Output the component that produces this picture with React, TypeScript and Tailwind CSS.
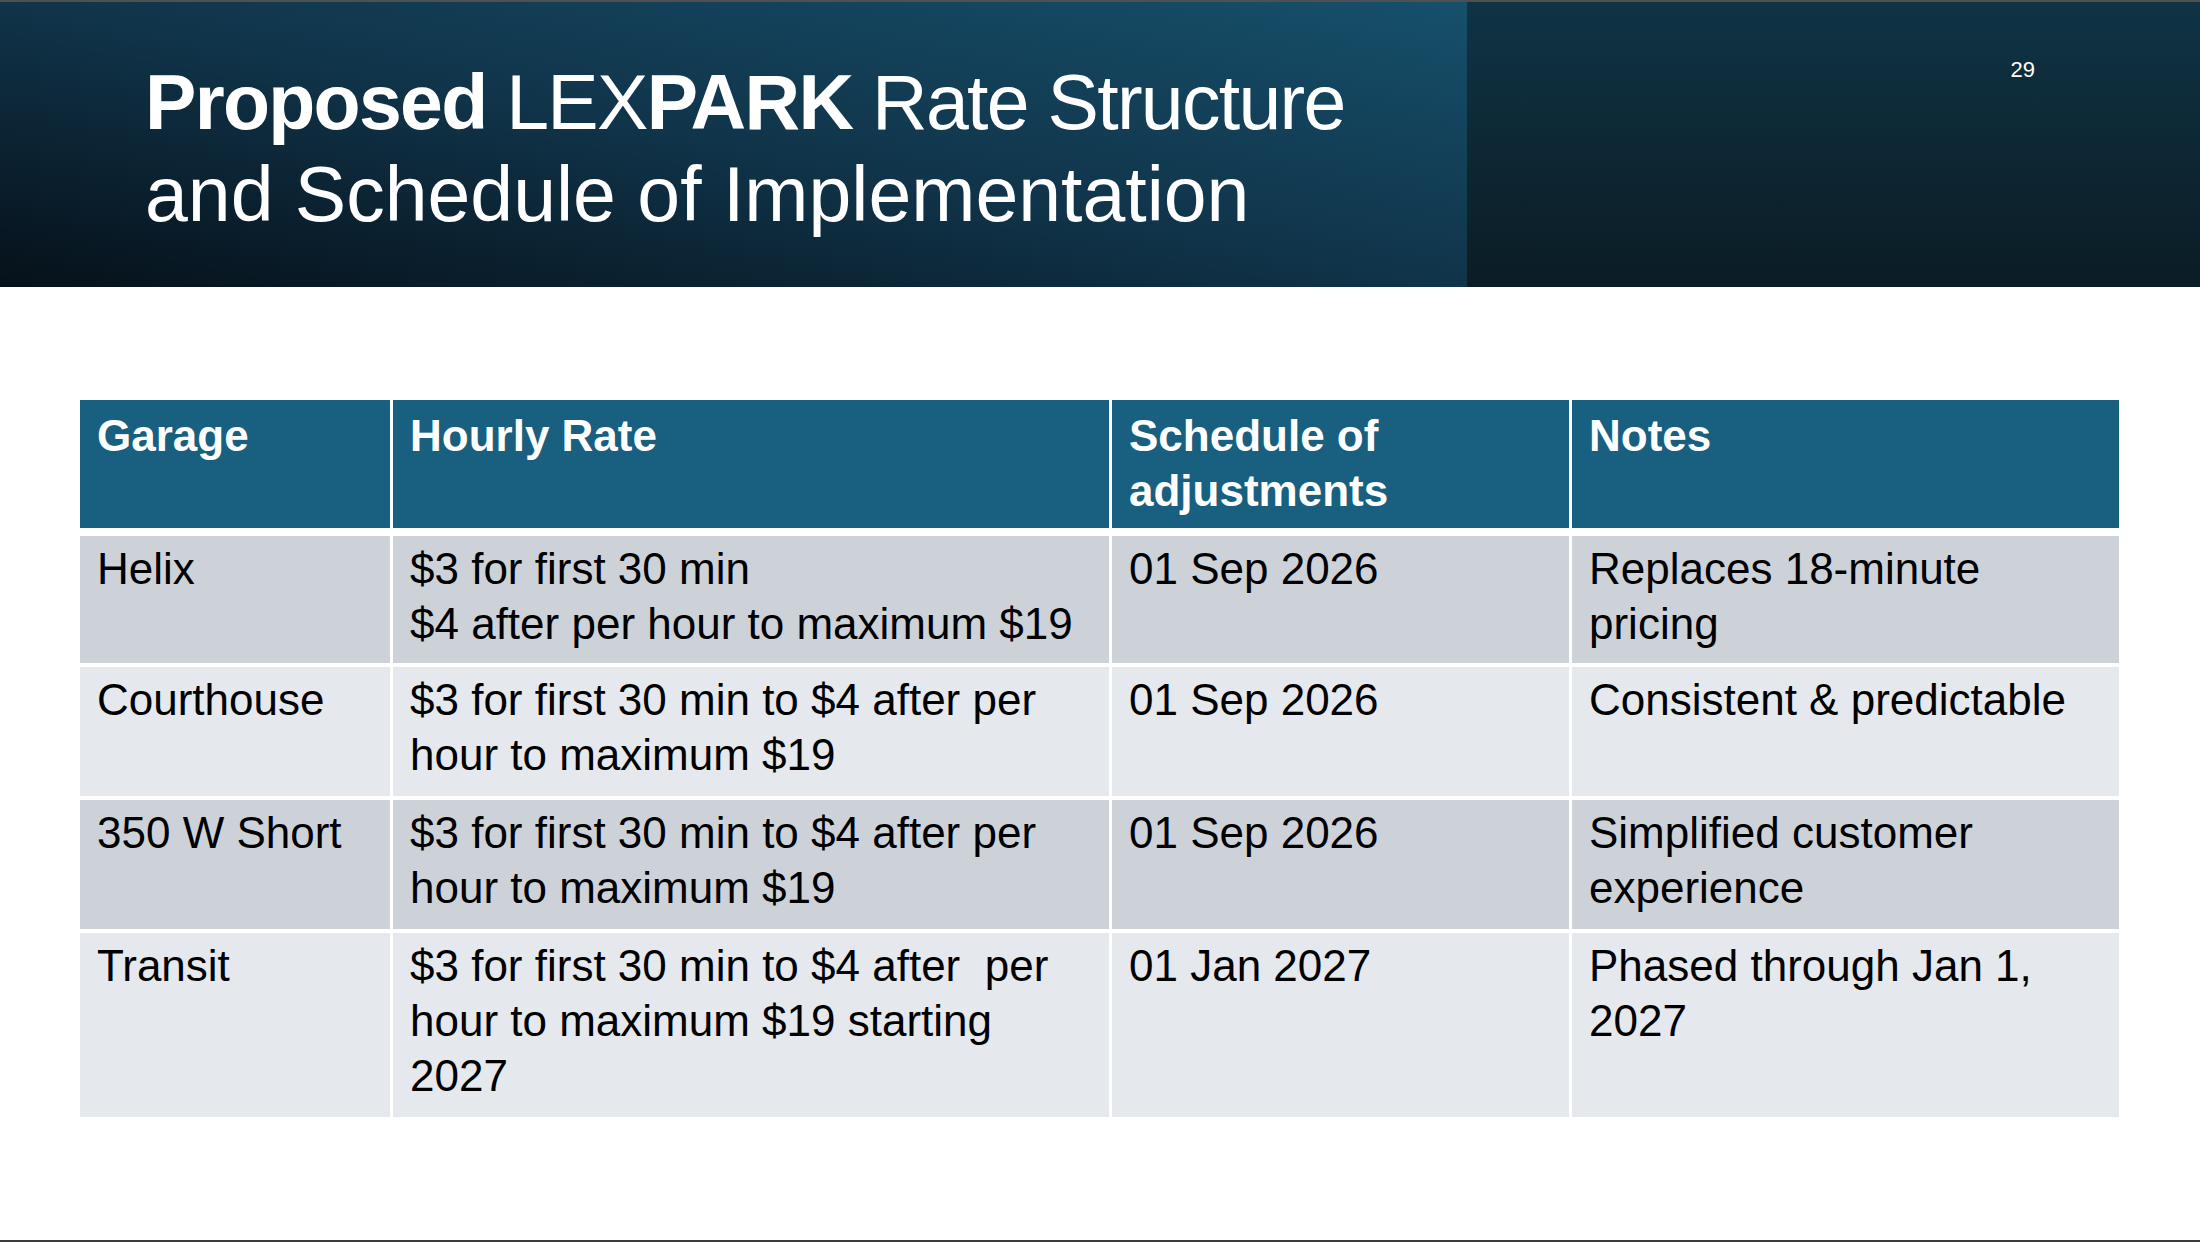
const rows = [
  {
    garage: "Helix",
    rate: ["$3 for first 30 min", "$4 after per hour to maximum $19"],
    date: "01 Sep 2026",
    notes: ["Replaces 18-minute", "pricing"],
    bg: "bg-[#cdd2d9]",
    h: "h-[127px]",
  },
  {
    garage: "Courthouse",
    rate: ["$3 for first 30 min to $4 after per", "hour to maximum $19"],
    date: "01 Sep 2026",
    notes: ["Consistent & predictable"],
    bg: "bg-[#e5e8ec]",
    h: "h-[129px]",
  },
  {
    garage: "350 W Short",
    rate: ["$3 for first 30 min to $4 after per", "hour to maximum $19"],
    date: "01 Sep 2026",
    notes: ["Simplified customer", "experience"],
    bg: "bg-[#cdd2d9]",
    h: "h-[129px]",
  },
  {
    garage: "Transit",
    rate: ["$3 for first 30 min to $4 after\u00a0 per", "hour to maximum $19 starting", "2027"],
    date: "01 Jan 2027",
    notes: ["Phased through Jan 1,", "2027"],
    bg: "bg-[#e5e8ec]",
    h: "h-[184px]",
  },
];

const grid = "grid grid-cols-[310px_716px_457px_547px] gap-x-[3px]";
const cell = "px-[17px] text-[44px] leading-[55px] whitespace-nowrap";

function Lines({ lines }: { lines: string[] }) {
  return (
    <>
      {lines.map((l, i) => (
        <div key={i}>{l}</div>
      ))}
    </>
  );
}

export default function App() {
  return (
    <div className="w-[2200px] h-[1242px] bg-white flex flex-col font-['Liberation_Sans',Arial,sans-serif] overflow-hidden">
      <div className="h-[2px] bg-[#505050]" />

      {/* Title band */}
      <div className="h-[285px] flex">
        <div className="w-[1467px] bg-linear-to-tr from-[#06111a] via-[#10344a] to-[#16506b] pl-[145px] pt-[54px] text-white text-[77px] leading-[92px]">
          <div className="whitespace-nowrap tracking-[-1.7px]">
            <span className="font-bold">Proposed</span> LEX
            <span className="font-bold">PARK</span> Rate Structure
          </div>
          <div className="whitespace-nowrap">and Schedule of Implementation</div>
        </div>
        <div className="flex-1 bg-linear-to-b from-[#0f3445] to-[#0b1c25] flex justify-end items-start pt-[57px] pr-[165px]">
          <span className="text-white text-[22px] leading-none">29</span>
        </div>
      </div>

      {/* Table */}
      <div className="ml-[80px] mt-[113px] w-[2039px] flex flex-col gap-[4px] text-black">
        <div className={`${grid} h-[128px] mb-[4px]`}>
          {["Garage", "Hourly Rate", "Schedule of|adjustments", "Notes"].map((t) => (
            <div key={t} className={`${cell} pt-[8px] bg-[#185f80] text-white font-bold`}>
              <Lines lines={t.split("|")} />
            </div>
          ))}
        </div>
        {rows.map((r) => (
          <div key={r.garage} className={`${grid} ${r.h}`}>
            <div className={`${cell} pt-[5px] ${r.bg}`}>{r.garage}</div>
            <div className={`${cell} pt-[5px] ${r.bg}`}>
              <Lines lines={r.rate} />
            </div>
            <div className={`${cell} pt-[5px] ${r.bg}`}>{r.date}</div>
            <div className={`${cell} pt-[5px] ${r.bg}`}>
              <Lines lines={r.notes} />
            </div>
          </div>
        ))}
      </div>

      <div className="flex-1" />
      <div className="h-[2px] bg-[#3a3a3a]" />
    </div>
  );
}
